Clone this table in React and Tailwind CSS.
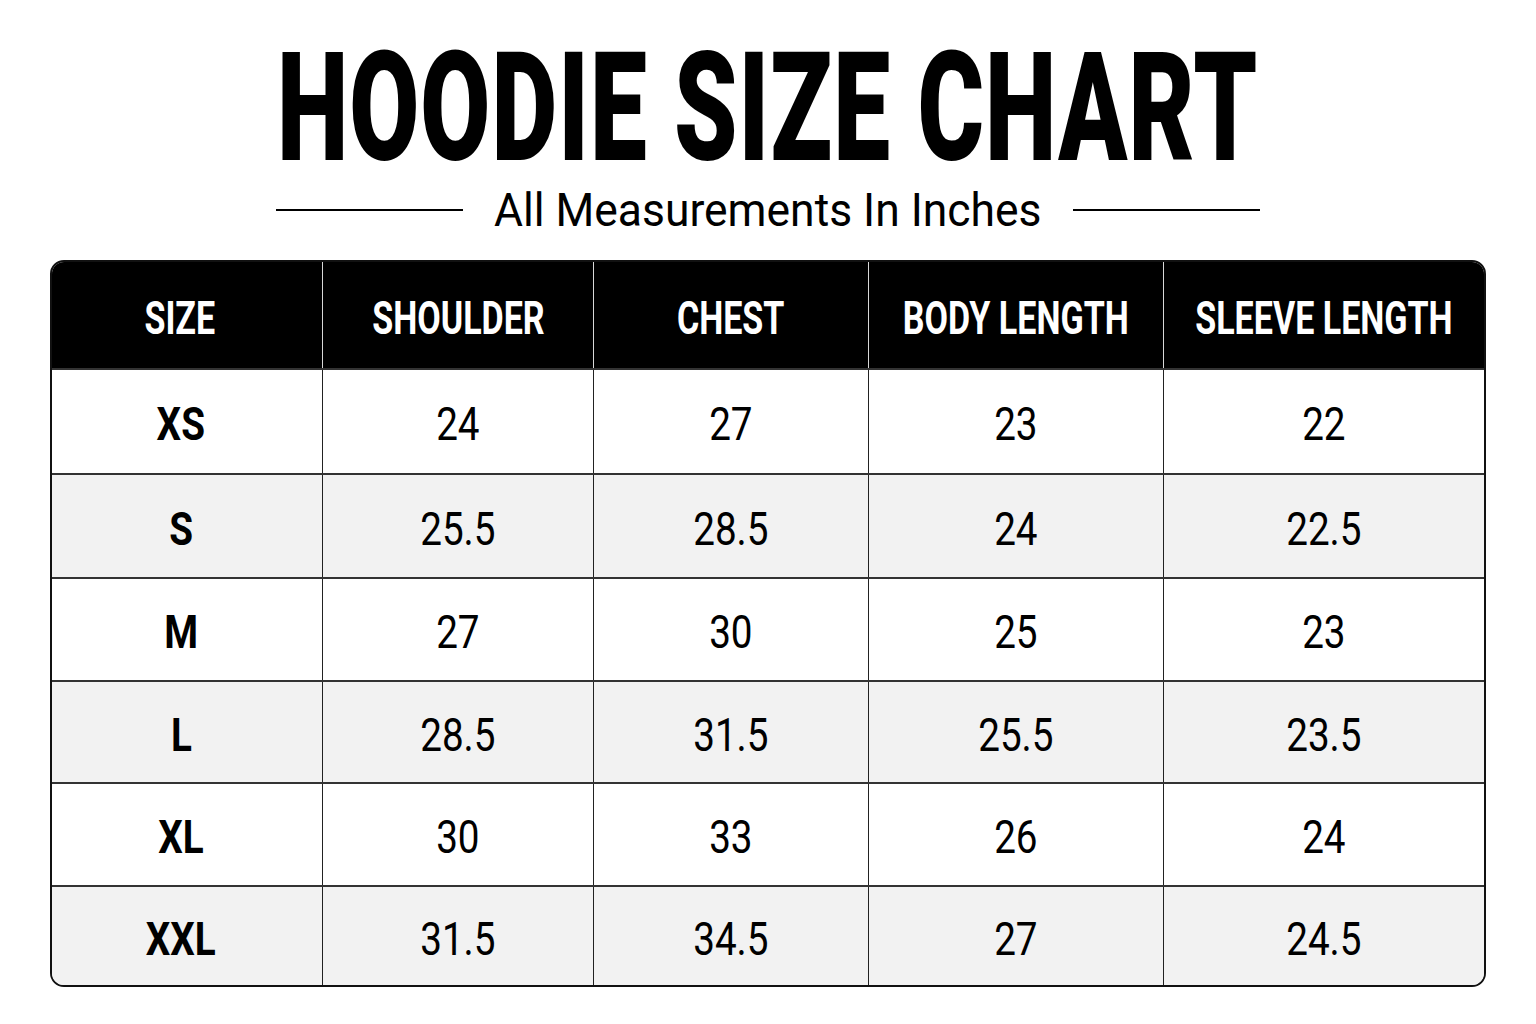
import React from 'react';

const COLS = ['SIZE', 'SHOULDER', 'CHEST', 'BODY LENGTH', 'SLEEVE LENGTH'];

const ROWS = [
  ['XS', '24', '27', '23', '22'],
  ['S', '25.5', '28.5', '24', '22.5'],
  ['M', '27', '30', '25', '23'],
  ['L', '28.5', '31.5', '25.5', '23.5'],
  ['XL', '30', '33', '26', '24'],
  ['XXL', '31.5', '34.5', '27', '24.5'],
];

const ROW_H = ['h-[105px]', 'h-[104px]', 'h-[103px]', 'h-[102px]', 'h-[103px]', 'h-[100px]'];

export default function App() {
  return (
    <div className="w-[1536px] h-[1024px] bg-white font-['Roboto',sans-serif] text-black flex flex-col items-center pt-[32px] overflow-hidden">
      {/* TITLE */}
      <h1 className="h-[152px] flex items-center justify-center whitespace-nowrap">
        <span className="inline-block text-[152px] leading-none font-black scale-x-[0.668] tracking-[0.01em]">
          HOODIE SIZE CHART
        </span>
      </h1>

      {/* SUBTITLE */}
      <div className="mt-[2px] flex items-center gap-[32px]">
        <div className="w-[187px] h-[2px] bg-black" />
        <div className="w-[546px] flex justify-center whitespace-nowrap">
          <span className="inline-block text-[47px] leading-none scale-x-[0.945]">All Measurements In Inches</span>
        </div>
        <div className="w-[187px] h-[2px] bg-black" />
      </div>

      {/* TABLE */}
      <div className="mt-[27px] w-[1436px] border-2 border-[#111] rounded-[14px] overflow-hidden">
        <div className="grid grid-cols-[270px_271px_275px_295px_minmax(0,1fr)] h-[106px] bg-black text-white">
          {COLS.map((c, i) => (
            <div key={c} className={`min-w-0 flex items-center justify-center pt-[5px] ${i > 0 ? 'border-l border-[#d8d8d8]' : 'pr-[14px]'}`}>
              <span className="inline-block text-[46px] leading-none font-bold scale-x-[0.74] whitespace-nowrap">{c}</span>
            </div>
          ))}
        </div>
        {ROWS.map((r, ri) => (
          <div
            key={r[0]}
            className={`grid grid-cols-[270px_271px_275px_295px_minmax(0,1fr)] ${ROW_H[ri]} border-t-2 border-[#333] ${ri % 2 === 1 ? 'bg-[#f2f2f2]' : 'bg-white'}`}
          >
            {r.map((v, i) => (
              <div key={i} className={`min-w-0 flex items-center justify-center pt-[5px] ${i > 0 ? 'border-l border-[#222]' : 'pr-[12px]'}`}>
                <span className={`inline-block text-[46px] leading-none scale-x-[0.84] whitespace-nowrap ${i === 0 ? 'font-bold' : 'font-normal'}`}>
                  {v}
                </span>
              </div>
            ))}
          </div>
        ))}
      </div>
    </div>
  );
}
